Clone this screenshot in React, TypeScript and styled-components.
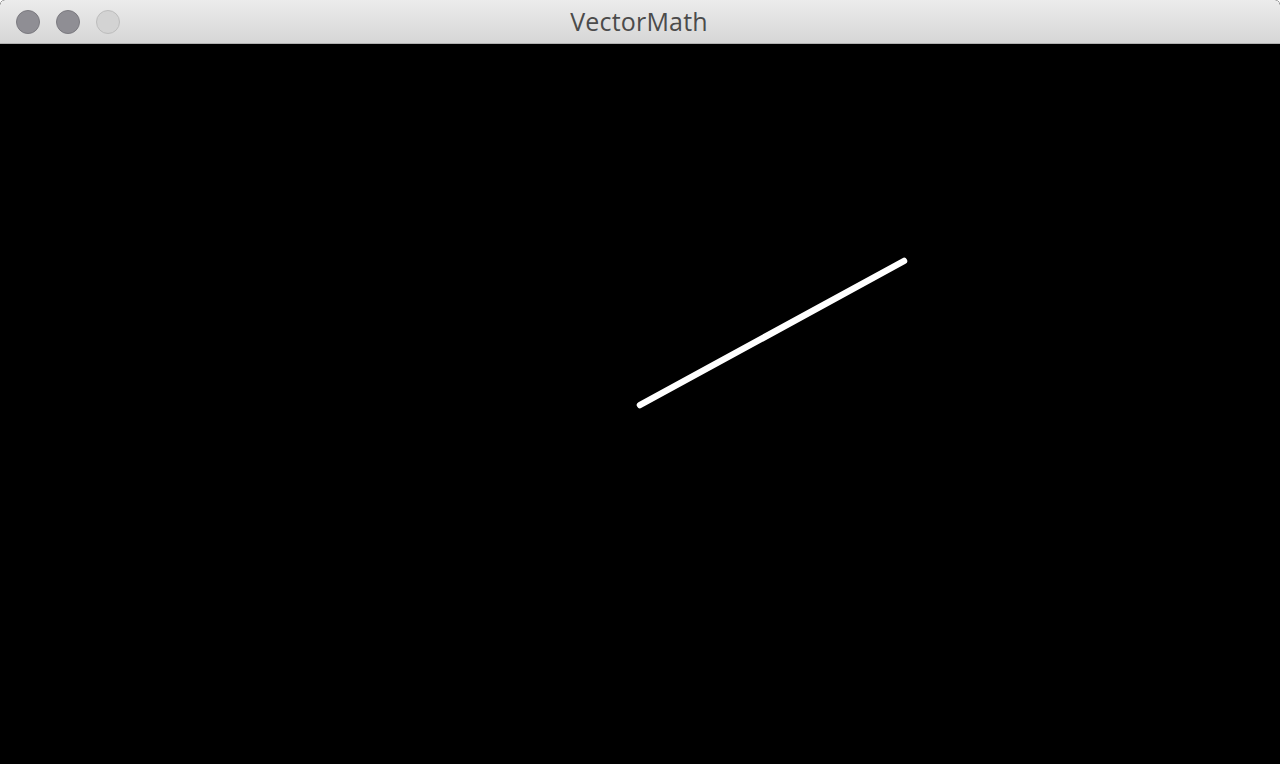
import styled, { createGlobalStyle } from "styled-components";

const GlobalStyle = createGlobalStyle`
  html, body {
    margin: 0;
    padding: 0;
    background: #ffffff;
  }
  #root {
    height: 764px;
  }
`;

const Window = styled.div`
  width: 1280px;
  height: 764px;
  display: flex;
  flex-direction: column;
  overflow: hidden;
  border-radius: 5px 5px 0 0;
  background: #000;
`;

const TitleBar = styled.div`
  height: 43px;
  flex-shrink: 0;
  position: relative;
  display: flex;
  align-items: center;
  justify-content: center;
  background: linear-gradient(to bottom, #ececec 0%, #d6d6d6 100%);
  border-bottom: 1px solid #b1b1b1;
  border-radius: 5px 5px 0 0;
`;

const Lights = styled.div`
  position: absolute;
  left: 16px;
  top: 10px;
  display: flex;
  gap: 16px;
`;

const Light = styled.div<{ $off?: boolean }>`
  width: 24px;
  height: 24px;
  box-sizing: border-box;
  border-radius: 50%;
  background: ${({ $off }) => ($off ? "#d3d3d3" : "#8f8e94")};
  border: 1px solid ${({ $off }) => ($off ? "#bdbdbd" : "#7b7a80")};
`;

const Title = styled.div`
  font-family: "Open Sans", "Liberation Sans", sans-serif;
  font-size: 25px;
  color: #4b4b4b;
  letter-spacing: 0.2px;
  margin-left: -2px;
  margin-top: -1px;
`;

const Canvas = styled.div`
  flex: 1;
  background: #000;
  svg {
    display: block;
  }
`;

export default function App() {
  return (
    <>
      <GlobalStyle />
      <Window>
        <TitleBar>
          <Lights>
            <Light />
            <Light />
            <Light $off />
          </Lights>
          <Title>VectorMath</Title>
        </TitleBar>
        <Canvas>
          <svg width="1280" height="720" viewBox="0 44 1280 720">
            <line
              x1="640"
              y1="405"
              x2="904"
              y2="261"
              stroke="#ffffff"
              strokeWidth="6.5"
              strokeLinecap="round"
            />
          </svg>
        </Canvas>
      </Window>
    </>
  );
}
